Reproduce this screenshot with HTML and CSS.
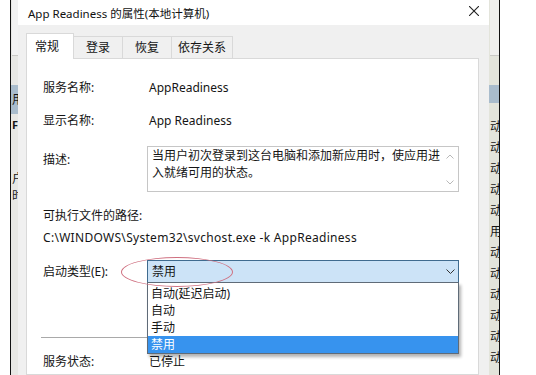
FILE: index.html
```html
<!DOCTYPE html>
<html lang="zh-CN">
<head>
    <meta charset="UTF-8">
    <title>App Readiness 的属性</title>
    <link rel="stylesheet" href="styles.css">
</head>
<body>
    <div class="screen">
        <div class="desk"></div>
        <div class="edge"></div>

        <!-- services window behind the dialog, left part -->
        <div class="behind behind-left">
            <div class="behind-head"></div>
            <div class="behind-sel">用</div>
            <div class="behind-row bold">F</div>
            <div class="behind-gap"></div>
            <div class="behind-row tight">户</div>
            <div class="behind-row tight">时</div>
        </div>

        <div class="dialog">
            <div class="titlebar">
                <span class="title">App Readiness 的属性(本地计算机)</span>
                <svg class="close" width="10" height="10" viewBox="0 0 10 10">
                    <path d="M0 0L10 10M10 0L0 10" stroke="#222" stroke-width="1.1" fill="none"/>
                </svg>
            </div>

            <div class="dialog-body">
                <div class="tabs">
                    <div class="tab active">常规</div>
                    <div class="tab">登录</div>
                    <div class="tab">恢复</div>
                    <div class="tab">依存关系</div>
                </div>

                <div class="panel">
                    <div class="field field-name">
                        <span class="label">服务名称:</span>
                        <span class="value">AppReadiness</span>
                    </div>
                    <div class="field field-display">
                        <span class="label">显示名称:</span>
                        <span class="value">App Readiness</span>
                    </div>
                    <div class="field field-desc">
                        <span class="label desc-label">描述:</span>
                        <div class="desc-box">
                            <div class="desc-text">当用户初次登录到这台电脑和添加新应用时，使应用进入就绪可用的状态。</div>
                            <div class="desc-scroll">
                                <svg width="8" height="5" viewBox="0 0 8 5"><path d="M0.5 4.5L4 1L7.5 4.5" stroke="#b8b8b8" fill="none"/></svg>
                                <svg width="8" height="5" viewBox="0 0 8 5"><path d="M0.5 0.5L4 4L7.5 0.5" stroke="#b8b8b8" fill="none"/></svg>
                            </div>
                        </div>
                    </div>

                    <div class="path-label">可执行文件的路径:</div>
                    <div class="path-value">C:\WINDOWS\System32\svchost.exe -k AppReadiness</div>

                    <div class="field field-startup">
                        <span class="label">启动类型(E):</span>
                        <div class="combo">
                            <span>禁用</span>
                            <svg class="combo-arrow" width="9" height="5" viewBox="0 0 9 5"><path d="M0.5 0.5L4.5 4.5L8.5 0.5" stroke="#333" fill="none"/></svg>
                            <ul class="combo-list">
                                <li>自动(延迟启动)</li>
                                <li>自动</li>
                                <li>手动</li>
                                <li class="selected">禁用</li>
                            </ul>
                        </div>
                        <div class="mark"></div>
                    </div>

                    <div class="rule"></div>

                    <div class="field field-status">
                        <span class="label">服务状态:</span>
                        <span class="value">已停止</span>
                    </div>
                </div>
            </div>
        </div>

        <!-- services window behind the dialog, right part -->
        <div class="behind behind-right">
            <div class="behind-head"></div>
            <div class="behind-sel"></div>
            <div class="behind-list">
                <div>动</div>
                <div>动</div>
                <div>动</div>
                <div>动</div>
                <div>动</div>
                <div>用</div>
                <div>动</div>
                <div>动</div>
                <div>动</div>
                <div>动</div>
                <div>动</div>
                <div>动</div>
            </div>
        </div>
        <div class="edge"></div>
        <div class="desk wide"></div>
    </div>
</body>
</html>
```

FILE: styles.css
```css
body {
    margin: 0;
    font-family: "Noto Sans", "Noto Sans CJK SC", sans-serif;
    font-size: 12px;
    color: #151515;
    background-color: #fff;
}
.screen {
    display: flex;
    width: 536px;
    height: 375px;
    overflow: hidden;
}
.desk {
    width: 10px;
    background-color: #fff;
}
.desk.wide {
    flex: 1;
}
.edge {
    width: 1px;
    background-color: #111;
}

/* window behind */
.behind {
    background-color: #e7e7e4;
    overflow: hidden;
    white-space: nowrap;
    line-height: 21px;
}
.behind-left {
    width: 6px;
    padding-left: 1px;
}
.behind-right {
    width: 9px;
    padding-left: 1px;
    background-color: #e3e4db;
}
.behind-head {
    height: 55px;
    border-bottom: 1px solid #c9c9c6;
    background-color: #efefed;
}
.behind-left .behind-head {
    background-color: #f2f2f2;
}
.behind-sel {
    margin-top: 29px;
    height: 29px;
    line-height: 29px;
    background-color: #a9bccc;
    margin-left: -1px;
    padding-left: 1px;
}
.behind-right .behind-sel {
    height: 18px;
}
.behind-row {
    line-height: 22px;
}
.behind-row.bold {
    font-weight: bold;
    font-size: 11px;
}
.behind-row.tight {
    line-height: 17px;
}
.behind-gap {
    height: 34px;
}
.behind-list {
    margin-top: 13px;
}

/* dialog */
.dialog {
    width: 471px;
    display: flex;
    flex-direction: column;
    background-color: #f0f0f0;
}
.titlebar {
    height: 25px;
    flex: none;
    background-color: #fff;
    display: flex;
    align-items: center;
    justify-content: space-between;
    padding: 0 10px;
    font-size: 11.5px;
    color: #111;
}
.close {
    margin-top: -4px;
}
.dialog-body {
    flex: 1;
    display: flex;
    flex-direction: column;
    padding: 8px 10px 0 8px;
}
.tabs {
    display: flex;
    align-items: flex-end;
    height: 26px;
    margin-bottom: -1px;
    position: relative;
    z-index: 1;
}
.tab {
    box-sizing: border-box;
    height: 23px;
    line-height: 21px;
    min-width: 50px;
    padding: 0 6px;
    text-align: center;
    border: 1px solid #d9d9d9;
    margin-right: -1px;
    background-color: #f0f0f0;
}
.tab.active {
    height: 26px;
    line-height: 26px;
    border-bottom: none;
    background-color: #fff;
    min-width: 48px;
    text-align: left;
    padding-left: 8px;
}
.panel {
    flex: 1;
    background-color: #fff;
    border: 1px solid #d9d9d9;
    padding: 0 19px 0 16px;
}

.field {
    display: grid;
    grid-template-columns: 104px 312px;
    line-height: 16px;
}
.value {
    padding-left: 2px;
}
.field-name {
    margin-top: 21px;
}
.field-display {
    margin-top: 17px;
}
.field-desc {
    margin-top: 17px;
}
.desc-label {
    padding-top: 6px;
}
.desc-box {
    box-sizing: border-box;
    height: 46px;
    border: 1px solid #c6c6c6;
    display: flex;
}
.desc-text {
    flex: 1;
    padding-left: 4px;
    line-height: 17px;
}
.desc-scroll {
    width: 16px;
    flex: none;
    display: flex;
    flex-direction: column;
    justify-content: space-between;
    align-items: center;
    padding: 7px 0 6px;
}
.path-label {
    margin-top: 16px;
    line-height: 16px;
}
.path-value {
    margin-top: 6px;
    line-height: 16px;
    letter-spacing: 0.3px;
}

.field-startup {
    margin-top: 14px;
    line-height: 21px;
    position: relative;
}
.field-startup .label {
    line-height: 23px;
}
.combo {
    box-sizing: border-box;
    height: 23px;
    position: relative;
    border: 1px solid #3f6b8f;
    background-color: #cce3f7;
    padding: 0 3px 0 4px;
    display: flex;
    justify-content: space-between;
    align-items: center;
}
.combo-list {
    position: absolute;
    top: 21px;
    left: -1px;
    width: 312px;
    box-sizing: border-box;
    margin: 0;
    padding: 2px 0 0;
    list-style: none;
    background-color: #fff;
    border: 1px solid #5f6b78;
    box-shadow: 2px 3px 3px rgba(0, 0, 0, 0.3);
    z-index: 2;
}
.combo-list li {
    height: 17px;
    line-height: 17px;
    padding-left: 3px;
}
.combo-list li.selected {
    background-color: #3793ee;
    color: #fff;
}
.mark {
    position: absolute;
    left: 78px;
    top: -3px;
    width: 110px;
    height: 28px;
    border: 1.5px solid #cf7080;
    border-radius: 50%;
    z-index: 3;
}

.rule {
    margin-top: 54px;
    margin-left: -2px;
    width: 410px;
    border-top: 1px solid #a9a9a9;
}
.field-status {
    margin-top: 16px;
}
```
